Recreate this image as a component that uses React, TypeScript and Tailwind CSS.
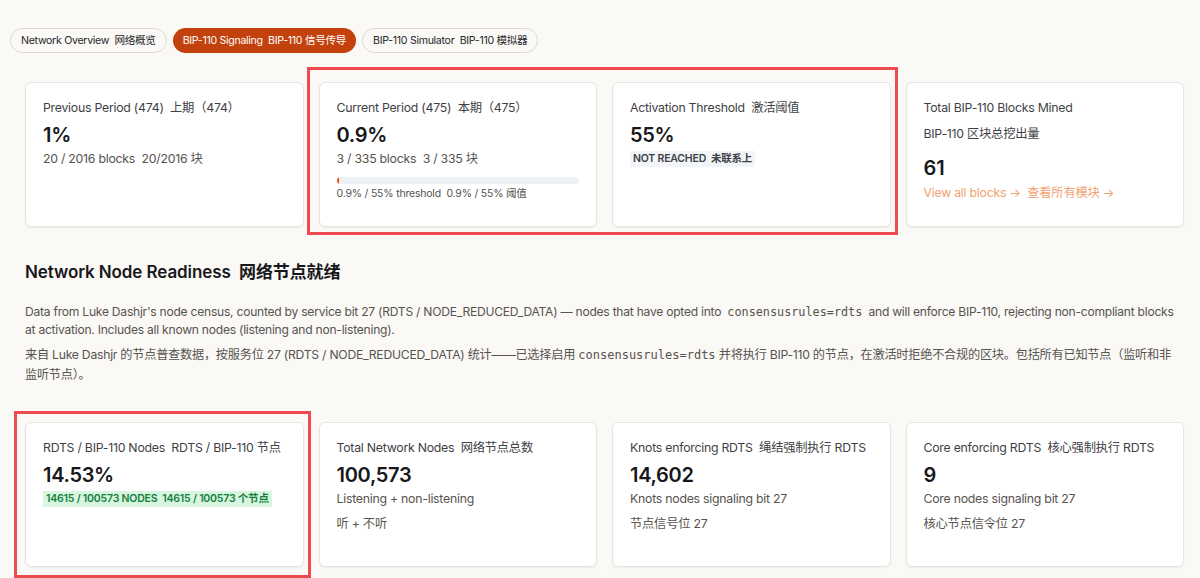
import React from "react";

const font = { fontFamily: '"Inter", "Noto Sans CJK SC", sans-serif' } as React.CSSProperties;

function Card({ children }: { children: React.ReactNode }) {
  return (
    <div className="bg-white border border-[#e7e5e0] rounded-md shadow-[0_1px_2px_rgba(0,0,0,0.06)] px-[17px] pt-[16px] pb-4 h-[145px]">
      {children}
    </div>
  );
}

function Title({ children }: { children: React.ReactNode }) {
  return <div className="text-[12.3px] leading-[18px] tracking-[-0.25px] text-[#3f3f46] whitespace-nowrap">{children}</div>;
}

function Value({ children }: { children: React.ReactNode }) {
  return <div className="text-[20px] leading-[28px] font-semibold text-[#18181b] mt-[4px] tracking-[-0.3px]">{children}</div>;
}

function Sub({ children }: { children: React.ReactNode }) {
  return <div className="text-[12.3px] leading-[18px] tracking-[-0.25px] text-[#57534e] mt-[1px]">{children}</div>;
}

function Tab({ children, active }: { children: React.ReactNode; active?: boolean }) {
  return active ? (
    <div className="h-[25px] px-[10px] flex items-center rounded-full bg-[#c2410c] text-[10.6px] tracking-[-0.3px] text-white whitespace-nowrap">
      {children}
    </div>
  ) : (
    <div className="h-[25px] px-[10px] flex items-center rounded-full border border-[#dcd9d2] bg-[#faf9f6] text-[10.6px] tracking-[-0.3px] text-[#27272a] whitespace-nowrap">
      {children}
    </div>
  );
}

export default function App() {
  return (
    <div style={font} className="relative min-h-[578px] w-[1200px] bg-[#faf9f6] overflow-hidden">
      <div className="flex gap-[6px] pl-[10px] pt-[28px]">
        <Tab>Network Overview&nbsp; 网络概览</Tab>
        <Tab active>BIP-110 Signaling&nbsp; BIP-110 信号传导</Tab>
        <Tab>BIP-110 Simulator&nbsp; BIP-110 模拟器</Tab>
      </div>

      <div className="pl-[25px] pr-[16px]">
        <div className="grid grid-cols-4 gap-[15px] mt-[29px]">
          <Card>
            <Title>Previous Period (474)&nbsp; 上期（474）</Title>
            <Value>1%</Value>
            <Sub>20 / 2016 blocks&nbsp; 20/2016 块</Sub>
          </Card>
          <Card>
            <Title>Current Period (475)&nbsp; 本期（475）</Title>
            <Value>0.9%</Value>
            <Sub>3 / 335 blocks&nbsp; 3 / 335 块</Sub>
            <div className="mt-[9px] h-[7px] bg-[#edf0f4] rounded-sm overflow-hidden">
              <div className="h-full bg-[#ea580c]" style={{ width: "2px" }} />
            </div>
            <div className="text-[10.5px] leading-[16px] tracking-[-0.2px] text-[#57534e] mt-[2px]">0.9% / 55% threshold&nbsp; 0.9% / 55% 阈值</div>
          </Card>
          <Card>
            <Title>Activation Threshold&nbsp; 激活阈值</Title>
            <Value>55%</Value>
            <div className="mt-[2px] text-[10.5px] leading-[16px]">
              <span className="inline-block bg-[#f1f4f8] px-[3px] text-[10.5px] leading-[16px] tracking-[-0.2px] font-semibold text-[#3f3f46]">NOT REACHED&nbsp; 未联系上</span>
            </div>
          </Card>
          <Card>
            <Title>Total BIP-110 Blocks Mined</Title>
            <div className="text-[12.3px] leading-[18px] tracking-[-0.25px] text-[#3f3f46] mt-[8px]">BIP-110 区块总挖出量</div>
            <div className="text-[20px] leading-[28px] font-semibold text-[#18181b] mt-[11px]">61</div>
            <div className="text-[12.3px] leading-[18px] tracking-[-0.25px] text-[#f2a271] mt-[2px]">View all blocks →&nbsp; 查看所有模块 →</div>
          </Card>
        </div>

        <h2 className="mt-[33px] text-[17px] leading-[24px] font-semibold text-[#18181b] tracking-[-0.1px]">Network Node Readiness&nbsp; 网络节点就绪</h2>

        <p className="mt-[19px] text-[12.1px] leading-[18px] tracking-[-0.25px] text-[#57534e]">
          Data from Luke Dashjr's node census, counted by service bit 27 (RDTS / NODE_REDUCED_DATA) — nodes that have opted into{" "}
          <code className="font-['DejaVu_Sans_Mono',monospace] text-[11.8px] tracking-normal px-[3px]">consensusrules=rdts</code> and will enforce BIP-110, rejecting non-compliant blocks at activation. Includes all known nodes (listening and non-listening).
        </p>
        <p className="mt-[6px] text-[12.2px] leading-[20px] tracking-[-0.25px] text-[#57534e] pr-[8px]">
          来自 Luke Dashjr 的节点普查数据，按服务位 27 (RDTS / NODE_REDUCED_DATA) 统计——已选择启用{" "}
          <code className="font-['DejaVu_Sans_Mono',monospace] text-[12px] tracking-normal">consensusrules=rdts</code> 并将执行 BIP-110 的节点，在激活时拒绝不合规的区块。包括所有已知节点（监听和非监听节点）。
        </p>

        <div className="grid grid-cols-4 gap-[15px] mt-[37px]">
          <Card>
            <Title>RDTS / BIP-110 Nodes&nbsp; RDTS / BIP-110 节点</Title>
            <Value>14.53%</Value>
            <div className="mt-[2px] text-[10.5px] leading-[16px]">
              <span className="inline-block bg-[#d7f5df] px-[3px] text-[10.5px] leading-[16px] tracking-[-0.2px] font-semibold text-[#15803d]">14615 / 100573 NODES&nbsp; 14615 / 100573 个节点</span>
            </div>
          </Card>
          <Card>
            <Title>Total Network Nodes&nbsp; 网络节点总数</Title>
            <Value>100,573</Value>
            <Sub>Listening + non-listening</Sub>
            <div className="text-[12.3px] leading-[18px] tracking-[-0.25px] text-[#57534e] mt-[7px]">听 + 不听</div>
          </Card>
          <Card>
            <Title>Knots enforcing RDTS&nbsp; 绳结强制执行 RDTS</Title>
            <Value>14,602</Value>
            <Sub>Knots nodes signaling bit 27</Sub>
            <div className="text-[12.3px] leading-[18px] tracking-[-0.25px] text-[#57534e] mt-[7px]">节点信号位 27</div>
          </Card>
          <Card>
            <Title>Core enforcing RDTS&nbsp; 核心强制执行 RDTS</Title>
            <Value>9</Value>
            <Sub>Core nodes signaling bit 27</Sub>
            <div className="text-[12.3px] leading-[18px] tracking-[-0.25px] text-[#57534e] mt-[7px]">核心节点信令位 27</div>
          </Card>
        </div>
      </div>

      <div className="absolute left-[307px] top-[67px] w-[591px] h-[168px] border-[3px] border-[#ec4a4f] pointer-events-none" />
      <div className="absolute left-[14px] top-[411px] w-[297px] h-[167px] border-[3px] border-[#ec4a4f] pointer-events-none" />
    </div>
  );
}
